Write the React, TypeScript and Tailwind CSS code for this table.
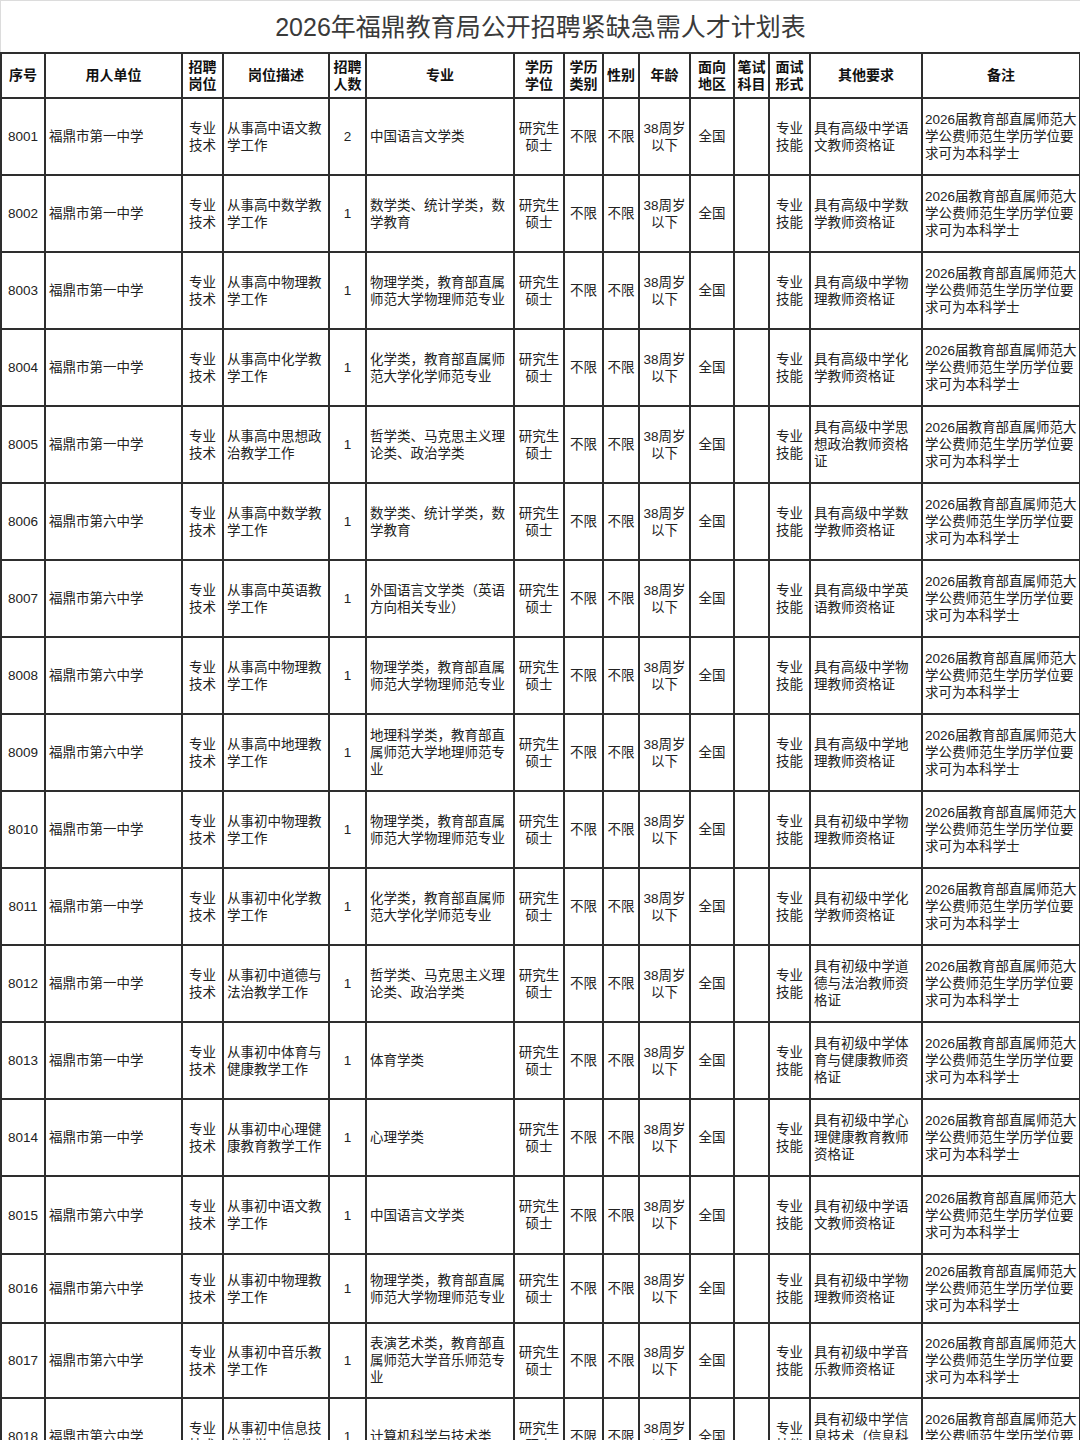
const font = { fontFamily: '"Liberation Sans", "Noto Sans CJK SC", sans-serif' }

type Row = {
  id: string
  unit: string
  desc: string[]
  num: string
  major: string[]
  other: string[]
}

const remark = ['2026届教育部直属师范大', '学公费师范生学历学位要', '求可为本科学士']

const rows: Row[] = [
  { id: '8001', unit: '福鼎市第一中学', desc: ['从事高中语文教', '学工作'], num: '2', major: ['中国语言文学类'], other: ['具有高级中学语', '文教师资格证'] },
  { id: '8002', unit: '福鼎市第一中学', desc: ['从事高中数学教', '学工作'], num: '1', major: ['数学类、统计学类，数', '学教育'], other: ['具有高级中学数', '学教师资格证'] },
  { id: '8003', unit: '福鼎市第一中学', desc: ['从事高中物理教', '学工作'], num: '1', major: ['物理学类，教育部直属', '师范大学物理师范专业'], other: ['具有高级中学物', '理教师资格证'] },
  { id: '8004', unit: '福鼎市第一中学', desc: ['从事高中化学教', '学工作'], num: '1', major: ['化学类，教育部直属师', '范大学化学师范专业'], other: ['具有高级中学化', '学教师资格证'] },
  { id: '8005', unit: '福鼎市第一中学', desc: ['从事高中思想政', '治教学工作'], num: '1', major: ['哲学类、马克思主义理', '论类、政治学类'], other: ['具有高级中学思', '想政治教师资格', '证'] },
  { id: '8006', unit: '福鼎市第六中学', desc: ['从事高中数学教', '学工作'], num: '1', major: ['数学类、统计学类，数', '学教育'], other: ['具有高级中学数', '学教师资格证'] },
  { id: '8007', unit: '福鼎市第六中学', desc: ['从事高中英语教', '学工作'], num: '1', major: ['外国语言文学类（英语', '方向相关专业）'], other: ['具有高级中学英', '语教师资格证'] },
  { id: '8008', unit: '福鼎市第六中学', desc: ['从事高中物理教', '学工作'], num: '1', major: ['物理学类，教育部直属', '师范大学物理师范专业'], other: ['具有高级中学物', '理教师资格证'] },
  { id: '8009', unit: '福鼎市第六中学', desc: ['从事高中地理教', '学工作'], num: '1', major: ['地理科学类，教育部直', '属师范大学地理师范专', '业'], other: ['具有高级中学地', '理教师资格证'] },
  { id: '8010', unit: '福鼎市第一中学', desc: ['从事初中物理教', '学工作'], num: '1', major: ['物理学类，教育部直属', '师范大学物理师范专业'], other: ['具有初级中学物', '理教师资格证'] },
  { id: '8011', unit: '福鼎市第一中学', desc: ['从事初中化学教', '学工作'], num: '1', major: ['化学类，教育部直属师', '范大学化学师范专业'], other: ['具有初级中学化', '学教师资格证'] },
  { id: '8012', unit: '福鼎市第一中学', desc: ['从事初中道德与', '法治教学工作'], num: '1', major: ['哲学类、马克思主义理', '论类、政治学类'], other: ['具有初级中学道', '德与法治教师资', '格证'] },
  { id: '8013', unit: '福鼎市第一中学', desc: ['从事初中体育与', '健康教学工作'], num: '1', major: ['体育学类'], other: ['具有初级中学体', '育与健康教师资', '格证'] },
  { id: '8014', unit: '福鼎市第一中学', desc: ['从事初中心理健', '康教育教学工作'], num: '1', major: ['心理学类'], other: ['具有初级中学心', '理健康教育教师', '资格证'] },
  { id: '8015', unit: '福鼎市第六中学', desc: ['从事初中语文教', '学工作'], num: '1', major: ['中国语言文学类'], other: ['具有初级中学语', '文教师资格证'] },
  { id: '8016', unit: '福鼎市第六中学', desc: ['从事初中物理教', '学工作'], num: '1', major: ['物理学类，教育部直属', '师范大学物理师范专业'], other: ['具有初级中学物', '理教师资格证'] },
  { id: '8017', unit: '福鼎市第六中学', desc: ['从事初中音乐教', '学工作'], num: '1', major: ['表演艺术类，教育部直', '属师范大学音乐师范专', '业'], other: ['具有初级中学音', '乐教师资格证'] },
  { id: '8018', unit: '福鼎市第六中学', desc: ['从事初中信息技', '术教学工作'], num: '1', major: ['计算机科学与技术类'], other: ['具有初级中学信', '息技术（信息科', '技）教师资格证'] },
]

// row heights as measured from the sheet; the last few rows are squeezed
const heights = [77, 77, 77, 77, 77, 77, 77, 77, 77, 77, 77, 77, 77, 77, 78, 69, 75, 77]

const widths = [44, 137, 41, 106, 37, 148, 50, 39, 36, 51, 44, 35, 41, 112, 158]

function Lines({ lines }: { lines: string[] }) {
  return (
    <>
      {lines.map((l, i) => (
        <div key={i}>{l}</div>
      ))}
    </>
  )
}

const td = 'border-2 border-[#2e2e2e] align-middle text-[13.5px] leading-[17px] text-[#222] p-0'
const th = 'border-2 border-[#2e2e2e] align-middle text-[14px] leading-[17px] font-bold text-[#111] text-center p-0'

export default function App() {
  return (
    <main className="w-[1080px] h-[1440px] overflow-hidden bg-white" style={font}>
      {/* Title */}
      <div className="h-[52px] flex items-center justify-center border-t border-l border-[#dcdcdc]">
        <h1 className="text-[25px] font-normal text-[#3a3a3a] pt-[2px]">
          2026年福鼎教育局公开招聘紧缺急需人才计划表
        </h1>
      </div>

      <table className="table-fixed border-collapse w-[1080px]">
        <colgroup>
          {widths.map((w, i) => (
            <col key={i} style={{ width: w }} />
          ))}
        </colgroup>
        <thead>
          <tr className="h-[45px]">
            <th className={th}>序号</th>
            <th className={th}>用人单位</th>
            <th className={th}>招聘<br />岗位</th>
            <th className={th}>岗位描述</th>
            <th className={th}>招聘<br />人数</th>
            <th className={th}>专业</th>
            <th className={th}>学历<br />学位</th>
            <th className={th}>学历<br />类别</th>
            <th className={th}>性别</th>
            <th className={th}>年龄</th>
            <th className={th}>面向<br />地区</th>
            <th className={th}>笔试<br />科目</th>
            <th className={th}>面试<br />形式</th>
            <th className={th}>其他要求</th>
            <th className={th}>备注</th>
          </tr>
        </thead>
        <tbody>
          {rows.map((r, i) => (
            <tr key={r.id} style={{ height: heights[i] }}>
              <td className={`${td} text-center`}>{r.id}</td>
              <td className={`${td} pl-[3px]`}>{r.unit}</td>
              <td className={`${td} text-center`}>专业<br />技术</td>
              <td className={`${td} pl-[3px]`}><Lines lines={r.desc} /></td>
              <td className={`${td} text-center`}>{r.num}</td>
              <td className={`${td} pl-[3px]`}><Lines lines={r.major} /></td>
              <td className={`${td} text-center`}>研究生<br />硕士</td>
              <td className={`${td} text-center`}>不限</td>
              <td className={`${td} text-center`}>不限</td>
              <td className={`${td} text-center`}>38周岁<br />以下</td>
              <td className={`${td} text-center`}>全国</td>
              <td className={td}></td>
              <td className={`${td} text-center`}>专业<br />技能</td>
              <td className={`${td} pl-[3px]`}><Lines lines={r.other} /></td>
              <td className={`${td} pl-[2px]`}><Lines lines={remark} /></td>
            </tr>
          ))}
        </tbody>
      </table>
    </main>
  )
}
